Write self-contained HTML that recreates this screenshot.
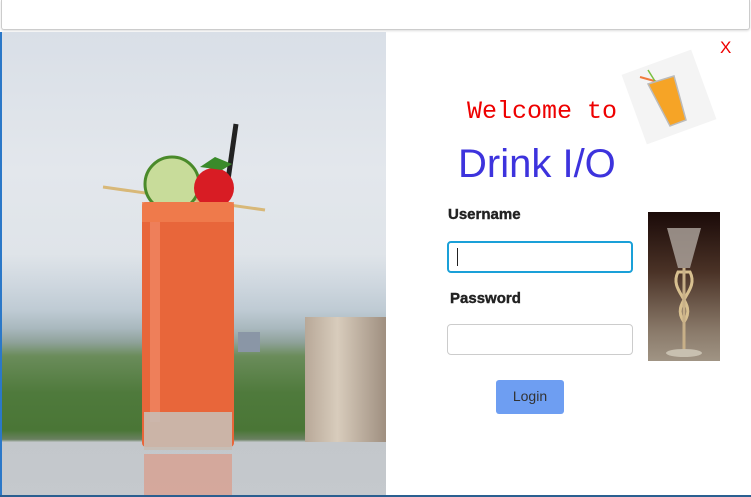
<!DOCTYPE html>
<html><head><style>
*{margin:0;padding:0;box-sizing:border-box}
body{width:751px;height:497px;background:#fff;position:relative;overflow:hidden;font-family:"Liberation Sans",sans-serif}
.top{position:absolute;left:1px;top:0;width:749px;height:30px;border:1px solid #ccc;border-top:none;border-radius:0 0 3px 3px;box-shadow:0 1px 2px #ddd}
.photo{position:absolute;left:0;top:32px;width:386px;height:463px;overflow:hidden;
background:linear-gradient(180deg,#d9dfe7 0%,#e3e7ec 30%,#dfe4e9 48%,#cdd6de 55%,#bfcbd4 60%,#a9b8be 64%,#8fa29a 67%,#6a8c5a 70%,#4f7a3c 78%,#4a7636 86%,#6a8060 88%,#c3c7cb 88.6%,#c5c9cd 100%)}
.bl{position:absolute;left:0;top:32px;width:2px;height:465px;background:#2b78c8}
.bot{position:absolute;left:0;top:495px;width:751px;height:2px;background:#2a5f90}
</style></head><body>
<div class="top"></div>
<div class="photo">
 <div style="position:absolute;left:305px;top:285px;width:81px;height:125px;background:linear-gradient(90deg,#b8a898,#d8ccbc 40%,#9f8f80);"></div>
 <div style="position:absolute;left:238px;top:300px;width:22px;height:20px;background:#8a96a6"></div>
 <svg style="position:absolute;left:0;top:0" width="386" height="463">
  <line x1="236" y1="92" x2="222" y2="190" stroke="#222" stroke-width="5"/>
  <line x1="103" y1="155" x2="265" y2="178" stroke="#d8b878" stroke-width="3"/>
  <circle cx="172" cy="152" r="27" fill="#c8dc9a" stroke="#4a8a2a" stroke-width="3"/>
  <circle cx="214" cy="156" r="20" fill="#d81c24"/>
  <path d="M200 135 L215 125 L232 132 L222 138 Z" fill="#3a8a2a"/>
  <rect x="142" y="170" width="92" height="245" rx="4" fill="#e8663a"/>
  <rect x="142" y="170" width="92" height="20" fill="#f08050" opacity=".8"/>
  <rect x="150" y="190" width="10" height="200" fill="#f29070" opacity=".6"/>
  <rect x="144" y="380" width="88" height="38" fill="#c8bcb4" opacity=".9"/>
  <rect x="144" y="422" width="88" height="41" fill="#d8a090" opacity=".8"/>
 </svg>
</div>
<div class="bl"></div>
<div style="position:absolute;left:720px;top:38px;color:#e00;font-size:17px">X</div>
<div style="position:absolute;left:632px;top:60px;width:74px;height:74px;background:#f4f4f4;transform:rotate(-20deg)"></div>
<svg style="position:absolute;left:628px;top:60px" width="84" height="84">
 <line x1="12" y1="17" x2="30" y2="22" stroke="#f07a3a" stroke-width="2"/>
 <line x1="20" y1="10" x2="30" y2="26" stroke="#7ac040" stroke-width="1.5"/>
 <path d="M20 24 L46 16 L58 60 L42 66 Z" fill="#f6a426" stroke="#bbb" stroke-width="1.5"/>
</svg>
<div style="position:absolute;left:467px;top:97px;color:#e00;font-family:'Liberation Mono',monospace;font-size:25px">Welcome to</div>
<div style="position:absolute;left:458px;top:142px;color:#3d33dd;font-size:40px;font-family:'Liberation Sans',sans-serif;font-weight:normal">Drink I/O</div>
<div style="position:absolute;left:448px;top:206px;font-weight:bold;font-size:15px;color:#222;-webkit-text-stroke:.4px #222">Username</div>
<div style="position:absolute;left:447px;top:241px;width:186px;height:32px;border:2px solid #1aa0d8;border-radius:4px"><div style="position:absolute;left:8px;top:5px;width:1px;height:18px;background:#222"></div></div>
<div style="position:absolute;left:450px;top:290px;font-weight:bold;font-size:15px;color:#222;-webkit-text-stroke:.4px #222">Password</div>
<div style="position:absolute;left:447px;top:324px;width:186px;height:31px;border:1px solid #ccc;border-radius:4px"></div>
<div style="position:absolute;left:496px;top:380px;width:68px;height:34px;background:#6e9ef2;border-radius:3px;text-align:center;line-height:33px;font-size:14px;color:#333">Login</div>
<div style="position:absolute;left:648px;top:212px;width:72px;height:149px;background:linear-gradient(180deg,#1a0a08,#4a3226 40%,#8a7a6a 80%,#a09484)"></div>
<svg style="position:absolute;left:648px;top:212px" width="72" height="149">
 <path d="M19 16 L53 16 L42 56 L30 56 Z" fill="#b0a8a0" opacity=".8"/>
 <path d="M30 60 C20 80,50 90,36 110 C22 90,52 80,42 60 Z" fill="none" stroke="#d8c090" stroke-width="3"/>
 <line x1="36" y1="56" x2="36" y2="138" stroke="#c8b088" stroke-width="3"/>
 <ellipse cx="36" cy="141" rx="18" ry="4" fill="#c8c0b0"/>
</svg>
<div class="bot"></div>
</body></html>
